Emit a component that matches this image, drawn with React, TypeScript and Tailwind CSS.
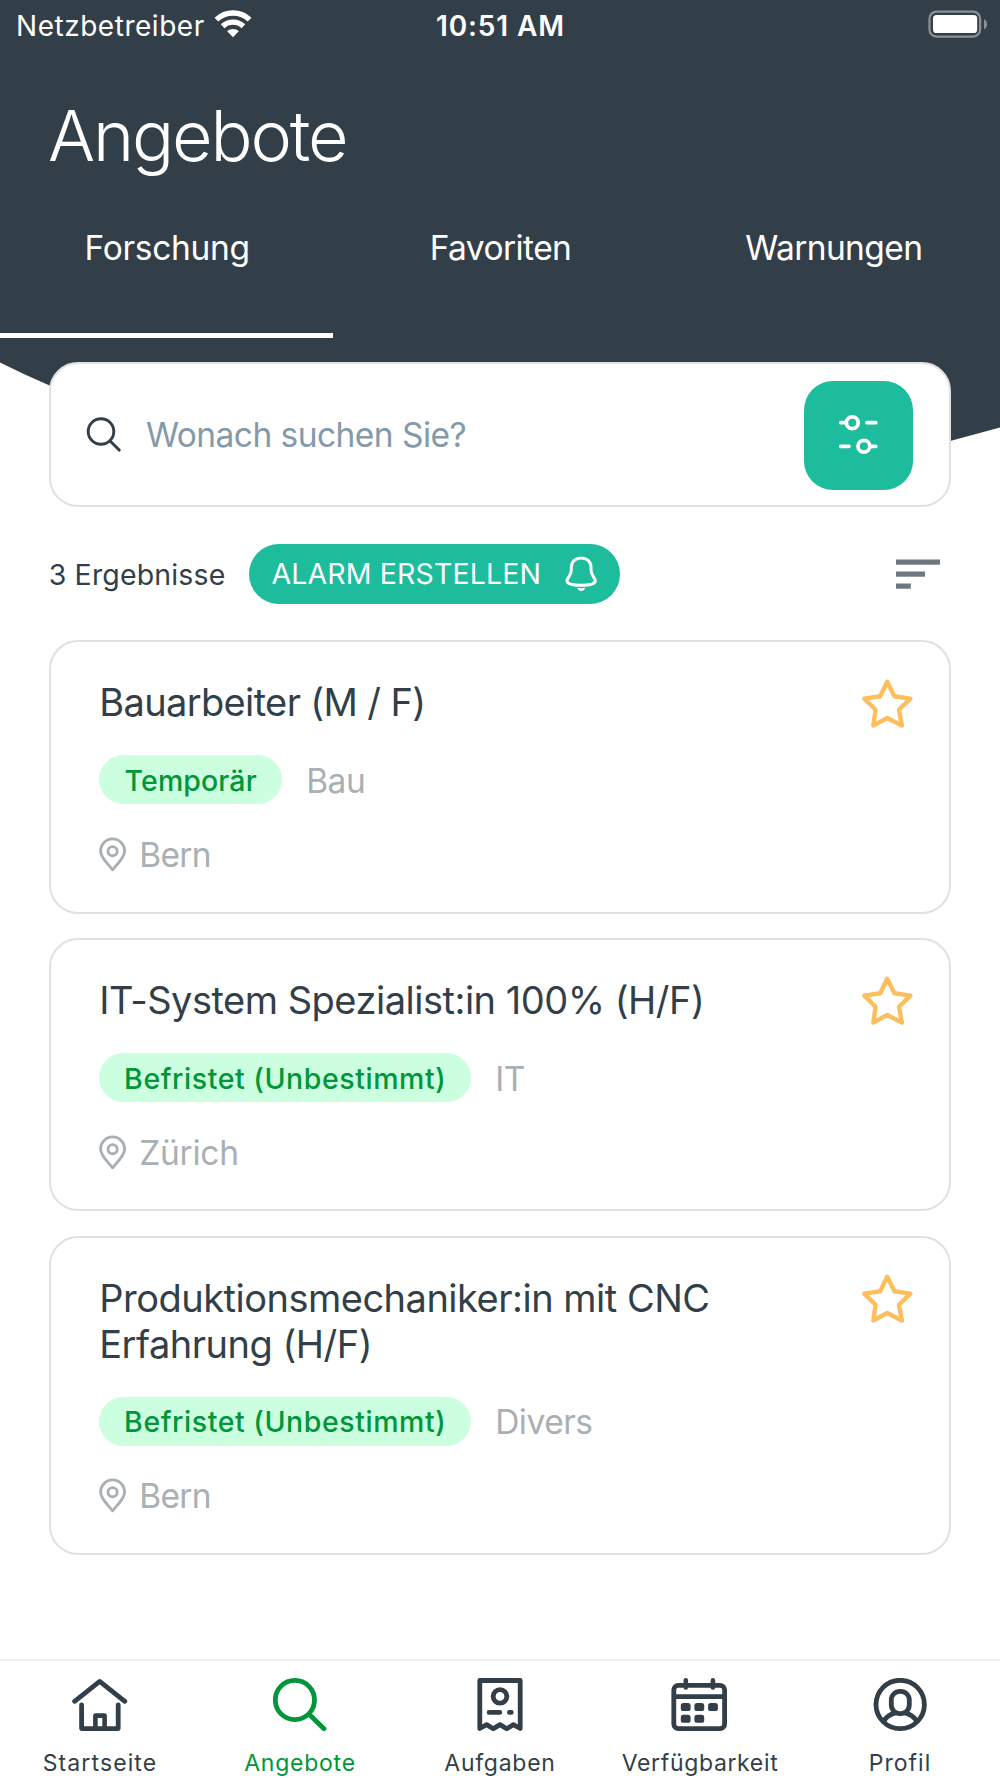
import React from 'react';

function WifiIcon() {
  return (
    <svg width="38" height="28" viewBox="0 0 38 28" fill="none" stroke="white" strokeWidth="5.4">
      <path d="M2.4 9.6A24 24 0 0 1 35.6 9.6" />
      <path d="M8.6 16.2A15.2 15.2 0 0 1 29.4 16.2" />
      <path d="M13.2 21.2C16.2 18.4 21.8 18.4 24.8 21.2L19 27.2Z" fill="white" stroke="none" />
    </svg>
  );
}

function BatteryIcon() {
  return (
    <svg width="60" height="28" viewBox="0 0 60 28" fill="none">
      <rect x="1.5" y="1.6" width="50.6" height="25" rx="7" stroke="#8b9196" strokeWidth="2.2" />
      <rect x="5" y="5" width="44.2" height="18" rx="3.6" fill="white" />
      <path d="M56 9.2C58.2 10 59 12 59 14.2C59 16.4 58.2 18.4 56 19.2Z" fill="#8b9196" />
    </svg>
  );
}

function SmallSearchIcon() {
  return (
    <svg width="36" height="36" viewBox="0 0 36 36" fill="none" stroke="#333f48" strokeWidth="2.9" strokeLinecap="round">
      <circle cx="15" cy="14.5" r="12.8" />
      <path d="M24.3 24.3L33.3 33.1" />
    </svg>
  );
}

function FilterIcon() {
  return (
    <svg width="40" height="40" viewBox="0 0 40 40" fill="none" stroke="white" strokeWidth="3.7" strokeLinecap="round">
      <path d="M2.8 7.7H7M29 7.7H37.8" />
      <circle cx="14.3" cy="7.7" r="5.9" />
      <path d="M2.8 31.3H11M33 31.3H37.8" />
      <circle cx="25.9" cy="31.3" r="5.9" />
    </svg>
  );
}

function BellIcon() {
  return (
    <svg width="33" height="36" viewBox="0 0 33 36" fill="none">
      <path
        d="M6.3 11.5C6.3 5.5 10.8 1.9 16.2 1.9S26 5.5 26 11.5V14C26 20 30.3 21.6 30.3 24.8C30.3 28.2 23 29.3 16.2 29.3S2 28.2 2 24.8C2 21.6 6.3 20 6.3 14Z"
        stroke="white"
        strokeWidth="3"
        strokeLinejoin="round"
      />
      <path d="M12.2 31.8C14.6 32.4 17.8 32.4 20.2 31.8C19.4 34 18 35 16.2 35S13 34 12.2 31.8Z" fill="white" />
    </svg>
  );
}

function SortIcon() {
  return (
    <svg width="44" height="30" viewBox="0 0 44 30" fill="#6d777f">
      <rect y="0.5" width="44" height="5.2" />
      <rect y="12.5" width="29" height="5.2" />
      <rect y="24.5" width="14.8" height="5.2" />
    </svg>
  );
}

function StarIcon() {
  return (
    <svg width="51" height="50" viewBox="0 0 51 50" fill="none" stroke="#fdbf5e" strokeWidth="4.4" strokeLinejoin="round">
      <path d="M25.2 2.8L32.4 17.3L48.4 19.6L37 30.8L39.9 46.5L25.2 39L11.3 46.5L13.6 30.8L2.4 19.6L18.2 17.3Z" />
    </svg>
  );
}

function PinIcon() {
  return (
    <svg width="28" height="35" viewBox="0 0 28 35" fill="none" stroke="#a9b0b4" strokeWidth="2.9" strokeLinejoin="round">
      <path d="M13.6 32.8C9 27 1.6 20.6 1.6 14.2C1.6 7.2 7 1.9 13.6 1.9S25.6 7.2 25.6 14.2C25.6 20.6 18.2 27 13.6 32.8Z" />
      <circle cx="13.6" cy="14.2" r="4.6" />
    </svg>
  );
}

function HomeIcon() {
  return (
    <svg width="56" height="54" viewBox="0 0 56 54" fill="none" stroke="currentColor" strokeWidth="4.8" strokeLinecap="round" strokeLinejoin="round">
      <path d="M2.6 23.3L27.7 3.4L52.8 23.3" />
      <path d="M9.6 27V50.6H46.2V27" />
      <path d="M23.4 50V37.6H32.6V50" strokeWidth="4.6" />
    </svg>
  );
}

function SearchIcon() {
  return (
    <svg width="56" height="54" viewBox="0 0 56 54" fill="none" stroke="currentColor" strokeWidth="4.8" strokeLinecap="round">
      <circle cx="22.9" cy="22" r="19.6" />
      <path d="M37.4 36.6L52 50.7" />
    </svg>
  );
}

function TaskIcon() {
  return (
    <svg width="56" height="54" viewBox="0 0 56 54" fill="none" stroke="currentColor" strokeWidth="4.8" strokeLinecap="round" strokeLinejoin="round">
      <path d="M7.8 50.5V2.5H48.2V50.5L41.4 46.6L34.7 50.8L28 46.6L21.3 50.8L14.6 46.6Z" />
      <circle cx="28" cy="18.4" r="6.8" />
      <path d="M17.1 34.4H27.8M37.4 34.4H39.3" />
    </svg>
  );
}

function CalendarIcon() {
  return (
    <svg className="overflow-visible" width="56" height="54" viewBox="0 0 56 54" fill="none" stroke="currentColor" strokeWidth="4.8" strokeLinecap="round">
      <rect x="1.8" y="7.3" width="50.8" height="43.4" rx="4.6" />
      <path d="M2.2 18.7H52" />
      <path d="M13.8 2.4V9.4M40.9 2.4V9.4" strokeWidth="4.6" />
      <g fill="currentColor" stroke="none">
        <rect x="8.8" y="25.1" width="9.8" height="8" rx="2.6" />
        <rect x="22.4" y="25.1" width="9.8" height="8" rx="2.6" />
        <rect x="36.1" y="25.1" width="9.8" height="8" rx="2.6" />
        <rect x="8.8" y="36.8" width="9.8" height="8" rx="2.6" />
        <rect x="22.4" y="36.8" width="9.8" height="8" rx="2.6" />
      </g>
    </svg>
  );
}

function ProfileIcon() {
  return (
    <svg width="56" height="54" viewBox="0 0 56 54" fill="none" stroke="currentColor" strokeWidth="4.8">
      <circle cx="28.2" cy="26.5" r="24.2" />
      <rect x="19.3" y="13.4" width="18" height="22.2" rx="8.6" />
      <path d="M11.6 43.4C14 38.8 18.4 36.2 23.6 34.6M44.8 43.4C42.4 38.8 38 36.2 32.8 34.6" />
    </svg>
  );
}

type Job = { title: React.ReactNode; tag: string; tagClass: string; sector: string; place: string; placeClass: string; titleClass: string };

const jobs: Job[] = [
  {
    title: 'Bauarbeiter (M / F)',
    titleClass: 'tracking-[-0.63px]',
    tag: 'Temporär',
    tagClass: 'w-[183px] tracking-[0.1px]',
    sector: 'Bau',
    place: 'Bern',
    placeClass: 'tracking-[-0.69px]',
  },
  {
    title: 'IT-System Spezialist:in 100% (H/F)',
    titleClass: 'pt-px -mb-px tracking-[-0.49px]',
    tag: 'Befristet (Unbestimmt)',
    tagClass: 'w-[372px] tracking-[0.56px]',
    sector: 'IT',
    place: 'Zürich',
    placeClass: 'tracking-[-0.25px]',
  },
  {
    title: (
      <>
        Produktionsmechaniker:in mit CNC
        <br />
        Erfahrung (H/F)
      </>
    ),
    titleClass: 'pt-px -mb-px tracking-[-0.5px]',
    tag: 'Befristet (Unbestimmt)',
    tagClass: 'w-[372px] tracking-[0.56px]',
    sector: 'Divers',
    place: 'Bern',
    placeClass: 'tracking-[-0.69px]',
  },
];

function JobCard({ job }: { job: Job }) {
  return (
    <article className="flex justify-between rounded-[29px] border-2 border-[#e0e1e2] bg-white pt-[36.4px] pr-[36.5px] pb-[33.4px] pl-[48.5px]">
      <div className="flex flex-col">
        <h2 className={`text-[38px] leading-[46px] whitespace-nowrap ${job.titleClass}`}>{job.title}</h2>
        <div className="mt-[30.6px] flex h-[49px] items-center gap-6">
          <span className={`flex h-[49px] items-center justify-center rounded-full bg-[#ccffe0] pt-[3px] text-[28.5px] font-medium text-[#009639] ${job.tagClass}`}>
            {job.tag}
          </span>
          <span className="pt-[3px] text-[33.5px] leading-[49px] tracking-[-0.5px] text-[#a9b0b4]">{job.sector}</span>
        </div>
        <div className="mt-[26px] flex h-12 items-center gap-3">
          <PinIcon />
          <span className={`pt-px text-[33.5px] leading-[48px] text-[#a9b0b4] ${job.placeClass}`}>{job.place}</span>
        </div>
      </div>
      <StarIcon />
    </article>
  );
}

const tabs = [
  { label: 'Forschung', cls: 'tracking-[-0.3px]' },
  { label: 'Favoriten', cls: 'tracking-[-0.56px]' },
  { label: 'Warnungen', cls: 'tracking-[-0.59px]' },
];

const navItems = [
  { label: 'Startseite', icon: <HomeIcon />, cls: 'tracking-[1.11px]' },
  { label: 'Angebote', icon: <SearchIcon />, cls: 'text-[#009639] tracking-[0.76px]' },
  { label: 'Aufgaben', icon: <TaskIcon />, cls: 'tracking-[0.74px]' },
  { label: 'Verfügbarkeit', icon: <CalendarIcon />, cls: 'tracking-[0.65px]' },
  { label: 'Profil', icon: <ProfileIcon />, cls: 'tracking-[1.03px]' },
];

export default function App() {
  return (
    <div className="relative flex h-[1778px] w-[1000px] flex-col overflow-hidden bg-white font-['Inter',sans-serif] text-[#333f48]">
      <header className="relative h-[362px] shrink-0 bg-[#333f48] text-white">
        <svg className="absolute top-[361px] left-0" width="1000" height="120" viewBox="0 0 1000 120" fill="#333f48">
          <path d="M0 0H1000V66.5L952 79.5C800 118 400 130 49 24.2Q24 13.5 0 1.4Z" />
        </svg>
        <div className="grid h-[51px] grid-cols-3 items-center">
          <div className="flex items-center gap-[9px] pl-4">
            <span className="text-[28px] tracking-[0.53px]">Netzbetreiber</span>
            <div className="mb-1">
              <WifiIcon />
            </div>
          </div>
          <div className="pl-px text-center text-[28px] font-semibold tracking-[0.9px]">10:51 AM</div>
          <div className="mb-[3px] flex justify-end pr-3">
            <BatteryIcon />
          </div>
        </div>
        <h1 className="mt-[35px] ml-12 text-[70px] leading-[100px] font-light tracking-[-2.14px]">Angebote</h1>
        <nav className="mt-[26px] grid h-[126px] grid-cols-3 text-center text-[33.5px] leading-[72px]">
          {tabs.map((t, i) => (
            <div key={t.label} className={i === 0 ? 'border-b-[5px] border-white pl-px' : 'pl-px'}>
              <span className={t.cls}>{t.label}</span>
            </div>
          ))}
        </nav>
      </header>

      <main className="relative flex flex-col px-[48.7px]">
        <div className="flex h-[145px] items-center rounded-[29px] border-2 border-[#e0e1e2] bg-white pr-[36.5px] pl-[35.8px]">
          <SmallSearchIcon />
          <span className="ml-[23.5px] pt-px text-[33.5px] tracking-[-0.54px] text-[#8499aa]">Wonach suchen Sie?</span>
          <div className="mt-px ml-auto flex h-[109px] w-[109px] items-center justify-center rounded-[29px] bg-[#1cbc9c]">
            <FilterIcon />
          </div>
        </div>

        <div className="mt-[36.6px] flex h-[60px] items-center">
          <span className="pt-[3px] text-[28.5px] tracking-[0.15px]">3 Ergebnisse</span>
          <div className="ml-6 flex h-[60px] w-[370.5px] items-center justify-between rounded-full bg-[#1cbc9c] pr-[21.5px] pl-[22px] text-white">
            <span className="pt-[2px] text-[28.5px] tracking-[0.13px]">ALARM ERSTELLEN</span>
            <BellIcon />
          </div>
          <div className="mr-[11.5px] ml-auto">
            <SortIcon />
          </div>
        </div>

        <div className="mt-[36.7px] flex flex-col gap-[24.4px]">
          {jobs.map((job, i) => (
            <JobCard key={i} job={job} />
          ))}
        </div>
      </main>

      <nav className="mt-auto grid h-[119px] shrink-0 grid-cols-5 border-t-2 border-[#eeeeee] bg-white">
        {navItems.map((n) => (
          <div key={n.label} className={`flex flex-col items-center pt-[17px] text-[23px] ${n.cls}`}>
            {n.icon}
            <span className="mt-4 leading-[30px]">{n.label}</span>
          </div>
        ))}
      </nav>
    </div>
  );
}
